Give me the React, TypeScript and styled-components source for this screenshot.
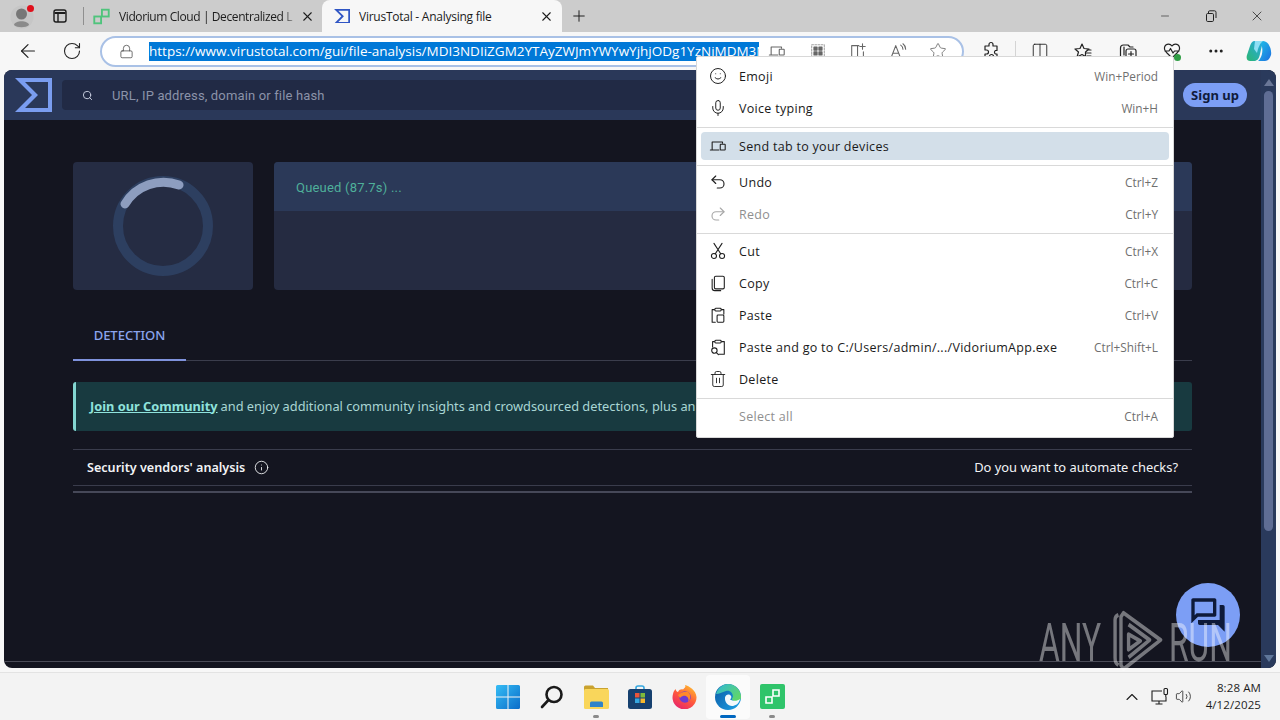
import React from "react";
import styled, { createGlobalStyle } from "styled-components";
import {
  ArrowLeft, RotateCw, Lock, Star, Columns2, Smile, Mic, Undo2, Redo2, Trash2,
  Search, X, Plus, Minus, Info, ChevronUp, Volume2, MoreHorizontal,
} from "lucide-react";
import { MdOutlineForum } from "react-icons/md";

const GlobalStyle = createGlobalStyle`
  html, body { margin: 0; padding: 0; overflow: hidden; background: #f3f3f3; }
  * { box-sizing: border-box; }
`;

const Screen = styled.div`
  position: relative;
  width: 1280px;
  height: 720px;
  display: flex;
  flex-direction: column;
  overflow: hidden;
  font-family: "Open Sans", "Noto Sans", sans-serif;
  background: #f7f7f7;
`;

/* browser chrome */
const TabStrip = styled.div`
  height: 32px;
  display: flex;
  align-items: center;
  background: #cccccc;
  color: #1c1c1c;
`;

const Avatar = styled.div`
  position: relative;
  width: 44px;
  height: 32px;
  padding-top: 1px;
  display: flex;
  align-items: center;
  justify-content: center;
`;

const RedDot = styled.span`
  position: absolute;
  left: 27px;
  top: 5px;
  width: 7px;
  height: 7px;
  border-radius: 50%;
  background: #e0101c;
`;

const StripButton = styled.div`
  width: 32px;
  height: 32px;
  display: flex;
  align-items: center;
  justify-content: center;
`;

const NewTabButton = styled(StripButton)`
  margin-left: 1px;
`;

const StripDivider = styled.div`
  width: 1px;
  height: 18px;
  margin: 0 6px 0 7px;
  background: #8f8f8f;
`;

const Tab = styled.div<{ $active?: boolean }>`
  height: 32px;
  display: flex;
  align-items: center;
  flex: none;
  width: ${p => (p.$active ? "240px" : "232px")};
  padding: ${p => (p.$active ? "0 8px 0 12px" : "0 7px 0 3px")};
  background: ${p => (p.$active ? "#f7f7f7" : "transparent")};
  border-radius: 8px 8px 0 0;
`;

const TabTitle = styled.span<{ $fade?: boolean }>`
  flex: 1;
  margin-left: 9px;
  font-size: 12px;
  letter-spacing: ${p => (p.$fade ? "-0.4px" : "-0.25px")};
  white-space: nowrap;
  overflow: hidden;
  ${p => p.$fade && "mask-image: linear-gradient(90deg, #000 90%, rgba(0,0,0,0.2) 97%);"}
`;

const WindowControls = styled.div`
  margin-left: auto;
  display: flex;
`;

const WindowButton = styled.div`
  width: 46px;
  height: 32px;
  display: flex;
  align-items: center;
  justify-content: center;
`;

const Toolbar = styled.div`
  height: 38px;
  display: flex;
  align-items: center;
  padding: 0 0 0 6px;
  background: #f7f7f7;
  color: #222;
`;

const ToolButton = styled.div<{ $w?: number }>`
  position: relative;
  flex: none;
  width: ${p => p.$w ?? 44}px;
  height: 30px;
  display: flex;
  align-items: center;
  justify-content: center;
`;

const AddressBar = styled.div`
  width: 864px;
  height: 31px;
  flex: none;
  margin-left: 6px;
  margin-right: 6px;
  display: flex;
  align-items: center;
  padding: 0 0 0 17px;
  background: #fff;
  border: 2px solid #a9c1e6;
  border-radius: 16px;
  overflow: hidden;
`;

const UrlSelection = styled.span`
  width: 610px;
  flex: none;
  margin-left: 15px;
  height: 19px;
  line-height: 19px;
  background: #0078d7;
  color: #fff;
  font-size: 13.5px;
  white-space: nowrap;
  overflow: hidden;
`;

const AddressIcons = styled.div`
  display: flex;
  align-items: center;
  margin-left: -2px;
  color: #666;
`;

const ToolDivider = styled.div`
  width: 1px;
  height: 20px;
  margin: 0 3px;
  background: #d4d4d4;
`;

const HealthDot = styled.span`
  position: absolute;
  right: 13px;
  bottom: 5px;
  width: 7px;
  height: 7px;
  border-radius: 50%;
  background: #2f9e44;
`;

/* web page */
const Page = styled.div`
  flex: 1;
  min-height: 0;
  display: flex;
  margin: 0 4px 4px;
  border-radius: 8px;
  overflow: hidden;
  background: #141520;
`;

const Viewport = styled.div`
  flex: 1;
  min-width: 0;
  display: flex;
  flex-direction: column;
`;

const SiteHeader = styled.div`
  height: 50px;
  flex: none;
  display: flex;
  align-items: center;
  padding: 0 14px 0 11px;
  background: #2a3859;
`;

const SearchBox = styled.div`
  flex: 1;
  height: 30px;
  margin: 0 13px 0 10px;
  display: flex;
  align-items: center;
  padding-left: 20px;
  gap: 19px;
  background: #212a45;
  border-radius: 4px;
  color: #cfd5e6;
`;

const SearchText = styled.span`
  font-size: 13px;
  letter-spacing: 0.15px;
  color: #8b93a9;
  font-family: Roboto, "Noto Sans", sans-serif;
`;

const SignUp = styled.div`
  width: 64px;
  height: 24px;
  border-radius: 12px;
  display: flex;
  align-items: center;
  justify-content: center;
  background: #7c9ef5;
  color: #101b3c;
  font-size: 13px;
  font-weight: 700;
  font-family: "Noto Sans", sans-serif;
`;

const Main = styled.div`
  flex: 1;
  padding: 42px 69px 0;
  font-family: "Noto Sans", sans-serif;
`;

const SummaryRow = styled.div`
  display: flex;
  gap: 21px;
  height: 128px;
`;

const SpinnerCard = styled.div`
  width: 180px;
  flex: none;
  display: flex;
  align-items: center;
  justify-content: center;
  background: #252c43;
  border-radius: 4px;
`;

const StatusCard = styled.div`
  flex: 1;
  background: #252b41;
  border-radius: 4px;
  overflow: hidden;
`;

const StatusHead = styled.div`
  height: 49px;
  display: flex;
  align-items: center;
  padding: 2px 0 0 22px;
  background: #2b3958;
  color: #4fb09a;
  font-size: 13px;
  font-family: Roboto, sans-serif;
  letter-spacing: 0.2px;
`;

const TabBar = styled.div`
  height: 50px;
  margin-top: 21px;
  display: flex;
  border-bottom: 1px solid #3b3d4c;
`;

const PageTab = styled.div`
  width: 113px;
  height: 50px;
  display: flex;
  align-items: center;
  justify-content: center;
  padding-bottom: 1px;
  border-bottom: 2px solid #7f92dc;
  color: #8ba5ee;
  font-size: 13px;
  font-weight: 500;
`;

const Banner = styled.div`
  height: 49px;
  margin-top: 21px;
  display: flex;
  align-items: center;
  padding: 0 0 2px 14px;
  background: #183a40;
  border-left: 3px solid #83d6d1;
  border-radius: 3px;
  color: #a9d6d4;
  font-size: 12.8px;
  white-space: nowrap;
  overflow: hidden;
`;

const BannerLink = styled.a`
  color: #8fe3dc;
  font-weight: 700;
  text-decoration: underline;
  margin-right: 3px;
`;

const VendorsRow = styled.div`
  height: 37px;
  margin-top: 18px;
  display: flex;
  align-items: center;
  justify-content: space-between;
  padding: 0 14px;
  border-top: 1px solid #3a3c4c;
  border-bottom: 1px solid #3a3c4c;
  color: #f2f3f6;
  font-size: 12.9px;
`;

const VendorsTitle = styled.span`
  display: flex;
  align-items: center;
  gap: 9px;
  font-size: 12.6px;
  font-weight: 600;
`;

const AutomateText = styled.span`
  margin-bottom: 2px;
`;

const ThickLine = styled.div`
  height: 2px;
  margin-top: 5px;
  background: #464858;
`;

const PageFooter = styled.div`
  height: 7px;
  flex: none;
  border-top: 1px solid #4b4c58;
`;

const Scrollbar = styled.div`
  position: relative;
  width: 15px;
  flex: none;
  display: flex;
  flex-direction: column;
  align-items: center;
  padding: 9px 0 6px;
  background: #2a3a5c;
`;

const ArrowUp = styled.span`
  width: 0;
  height: 0;
  border-left: 5px solid transparent;
  border-right: 5px solid transparent;
  border-bottom: 7px solid #6a7797;
`;

const ArrowDown = styled(ArrowUp)`
  transform: rotate(180deg);
  margin-top: auto;
  border-bottom-color: #5f7699;
`;

const ScrollThumb = styled.div`
  width: 9px;
  height: 440px;
  margin-top: 5px;
  border-radius: 5px;
  background: #5f6d94;
`;

/* overlays */
const ChatButton = styled.div`
  position: absolute;
  left: 1176px;
  top: 583px;
  width: 64px;
  height: 64px;
  border-radius: 50%;
  display: flex;
  align-items: center;
  justify-content: center;
  background: #7c9ef5;
  color: #0e1a3a;
`;

const Watermark = styled.div`
  position: absolute;
  left: 1039px;
  top: 608px;
  height: 64px;
  display: flex;
  align-items: center;
  gap: 5px;
  color: rgba(255, 255, 255, 0.42);
`;

const WatermarkWord = styled.span`
  display: inline-block;
  width: 66px;
  font-family: Roboto, sans-serif;
  font-weight: 400;
  font-size: 53px;
  line-height: 64px;
  padding-top: 6px;
  transform: scaleX(0.6);
  transform-origin: left center;
  white-space: nowrap;
`;

const ContextMenu = styled.div`
  position: absolute;
  left: 696px;
  top: 56px;
  width: 478px;
  height: 382px;
  padding: 3px 0 0;
  background: #fff;
  border: 1px solid #d8d8d8;
  border-radius: 2px;
  color: #1a1a1a;
  font-size: 12.5px;
  font-family: "Open Sans", "Noto Sans", sans-serif;
`;

const MenuItem = styled.div<{ $disabled?: boolean; $active?: boolean }>`
  height: ${p => (p.$active ? 28 : 32)}px;
  margin: ${p => (p.$active ? "4px 4px 0" : "0 4px")};
  padding: 0 11px 0 8px;
  display: flex;
  align-items: center;
  border-radius: 4px;
  letter-spacing: 0.3px;
  background: ${p => (p.$active ? "#d3dfe9" : "transparent")};
  color: ${p => (p.$disabled ? "#8f8f8f" : "#1a1a1a")};
`;

const MenuIcon = styled.span<{ $disabled?: boolean }>`
  width: 18px;
  height: 18px;
  margin-right: 12px;
  flex: none;
  display: flex;
  align-items: center;
  justify-content: center;
  color: ${p => (p.$disabled ? "#a8a8a8" : "#1f1f1f")};
`;

const MenuLabel = styled.span`
  flex: 1;
  white-space: nowrap;
`;

const Shortcut = styled.span`
  font-size: 11.8px;
  letter-spacing: 0;
  color: #6f6f6f;
  white-space: nowrap;
`;

const MenuLine = styled.div<{ $top?: number; $bottom?: number }>`
  height: 1px;
  margin: ${p => p.$top ?? 3}px 0 ${p => p.$bottom ?? 1}px;
  background: #d9d9d9;
`;

/* taskbar */
const Taskbar = styled.div`
  height: 48px;
  flex: none;
  display: grid;
  grid-template-columns: 1fr auto 1fr;
  align-items: center;
  background: #f3f3f3;
  border-top: 1px solid #e3e3e3;
`;

const TaskIcons = styled.div`
  grid-column: 2;
  display: flex;
`;

const TaskSlot = styled.div<{ $active?: boolean }>`
  position: relative;
  width: 44px;
  height: 44px;
  display: flex;
  align-items: center;
  justify-content: center;
  border-radius: 4px;
  background: ${p => (p.$active ? "#fbfbfb" : "transparent")};
`;

const RunMark = styled.span<{ $active?: boolean }>`
  position: absolute;
  bottom: 1px;
  left: 50%;
  transform: translateX(-50%);
  width: ${p => (p.$active ? 16 : 6)}px;
  height: 3px;
  border-radius: 2px;
  background: ${p => (p.$active ? "#0067c0" : "#8a8a8a")};
`;

const Tray = styled.div`
  grid-column: 3;
  justify-self: end;
  display: flex;
  align-items: center;
  padding-right: 19px;
  color: #1d1d1d;
`;

const TrayIcon = styled.div<{ $w: number }>`
  width: ${p => p.$w}px;
  display: flex;
  justify-content: center;
`;

const Clock = styled.div`
  margin: -2px 0 0 13px;
  text-align: right;
  font-size: 11.5px;
  line-height: 17px;
  letter-spacing: 0.1px;
`;

/* drawings */
const VtLogo = ({ size, color = "#7a9df0" }: { size: number; color?: string }) => (
  <svg width={size} height={size * 34 / 37} viewBox="0 0 37 34" style={{ flex: "none" }}>
    <path fillRule="evenodd" fill={color} d="M0 0H37V34H0L17 17ZM10 4L23 17L10 30H33V4Z" />
  </svg>
);

const VidoriumMark = ({ size, color }: { size: number; color: string }) => (
  <svg width={size} height={size} viewBox="0 0 20 20" fill="none" stroke={color} strokeWidth="2.2" style={{ flex: "none" }}>
    <rect x="1.5" y="10" width="8" height="8" />
    <rect x="10.5" y="2" width="8" height="8" />
  </svg>
);

const Outline = ({ size = 18, children }: { size?: number; children: React.ReactNode }) => (
  <svg width={size} height={size} viewBox="0 0 20 20" fill="none" stroke="currentColor" strokeWidth="1.2" strokeLinecap="round" strokeLinejoin="round">
    {children}
  </svg>
);

const DevicesIcon = ({ size }: { size?: number }) => (
  <Outline size={size}>
    <path d="M3.5 14V5.5H15V7M1.5 14.5H11" />
    <rect x="12.5" y="8" width="5.5" height="6.5" rx="0.5" />
  </Outline>
);

const AppsIcon = () => (
  <Outline>
    <rect x="3" y="3" width="14" height="14" strokeDasharray="2 1.5" strokeOpacity="0.6" />
    <rect x="5.5" y="5.5" width="3.5" height="3.5" fill="currentColor" />
    <rect x="11" y="5.5" width="3.5" height="3.5" fill="currentColor" />
    <rect x="5.5" y="11" width="3.5" height="3.5" fill="currentColor" />
    <rect x="11" y="11" width="3.5" height="3.5" fill="currentColor" />
  </Outline>
);

const SplitAddIcon = () => (
  <Outline>
    <path d="M11 4H3V17H16V11M9.5 4V17M15 2V8M12 5H18" />
  </Outline>
);

const ReadAloudIcon = () => (
  <Outline>
    <path d="M2.5 17L7.5 4L12.5 17M4.5 12.5H10.5M13 3.5C14.5 4.5 15.5 6 15.5 8M15.5 2C17.5 3.5 18.5 5.5 18.5 8" />
  </Outline>
);

const ExtensionIcon = () => (
  <Outline size={20}>
    <path d="M8 3.5A2 2 0 0 1 12 3.5V5H16V9.5H14.5A2 2 0 0 0 14.5 13H16V17H12.5V15.5A2 2 0 0 0 8.5 15.5V17H4V13H5.5A2 2 0 0 0 5.5 9H4V5H8Z" />
  </Outline>
);

const FavListIcon = () => (
  <Outline size={20}>
    <path d="M9 3L11 7.5L16 8L12.5 11V15.5L9 13.5L4 16L5.5 11L2 8L7 7.5ZM13.5 12H18M14 15H18M14 9H18" />
  </Outline>
);

const CollectionsIcon = () => (
  <Outline size={20}>
    <path d="M6 17H4.5A2 2 0 0 1 2.5 15V7A3 3 0 0 1 5.5 4H10L12 6H15M6 6V14" />
    <rect x="8" y="8" width="10" height="10" rx="2" />
    <path d="M13 10.5V15.5M10.5 13H15.5" />
  </Outline>
);

const HealthIcon = () => (
  <Outline size={20}>
    <path d="M10 5C7.5 1.5 2 3 2.5 8C2.7 10 4 11 5 12L10 17L15 12C16 11 17.3 10 17.5 8C18 3 12.5 1.5 10 5ZM3 10H7L8.5 7.5L11 12L12.5 10H17" />
  </Outline>
);

const TabActionsIcon = () => (
  <svg width="16" height="16" viewBox="0 0 16 16" fill="none" stroke="#1c1c1c" strokeWidth="1.4">
    <rect x="2" y="2" width="12" height="12" rx="2" />
    <path d="M2.5 5H13.5" strokeWidth="2" />
    <path d="M6 5V14" />
  </svg>
);

const RestoreIcon = () => (
  <svg width="12" height="12" viewBox="0 0 12 12" fill="none" stroke="#222" strokeWidth="1">
    <rect x="1.5" y="3.5" width="7" height="8" rx="1.2" />
    <path d="M3.5 3V2A1.2 1.2 0 0 1 4.7 .8H9.5A1.5 1.5 0 0 1 11 2.3V8" />
  </svg>
);

const PersonIcon = () => (
  <svg width="24" height="24" viewBox="0 0 24 24">
    <circle cx="12" cy="12" r="11.5" fill="#c6c6c6" />
    <circle cx="11.5" cy="9" r="5.5" fill="#777" />
    <path d="M4 20C5 15 18 15 19 20C16 23 7 23 4 20Z" fill="#8a8a8a" />
  </svg>
);

const ScissorsIcon = () => (
  <Outline>
    <circle cx="5.5" cy="15.5" r="2.8" />
    <circle cx="14.5" cy="15.5" r="2.8" />
    <path d="M7 13L14.5 1.5M13 13L5.5 1.5" />
  </Outline>
);

const CopyIcon = () => (
  <Outline>
    <rect x="6" y="2.5" width="11" height="14" rx="1.5" />
    <path d="M3.5 6V15.5A3 3 0 0 0 6.5 18.5H13" />
  </Outline>
);

const PasteIcon = () => (
  <Outline>
    <path d="M6 4H3.5V18H7M14 4H16.5V9" />
    <rect x="6.5" y="2.5" width="7" height="3" rx="1" />
    <rect x="9" y="10" width="7.5" height="8" rx="1" />
  </Outline>
);

const PasteGoIcon = () => (
  <Outline>
    <path d="M6 4H4V10M14 4H17V18H11" />
    <rect x="6.5" y="2.5" width="7" height="3" rx="1" />
    <circle cx="6" cy="14" r="3" />
    <path d="M8.2 16.2L10.5 18.5" />
  </Outline>
);

const CopilotIcon = () => (
  <svg width="26" height="26" viewBox="0 0 26 26">
    <defs>
      <linearGradient id="cpA" x1="0" y1="0" x2="1" y2="1">
        <stop offset="0" stopColor="#1fc3e8" />
        <stop offset="1" stopColor="#1e6fe0" />
      </linearGradient>
      <linearGradient id="cpB" x1="0" y1="1" x2="1" y2="0">
        <stop offset="0" stopColor="#2bb673" />
        <stop offset="1" stopColor="#28a8ea" />
      </linearGradient>
    </defs>
    <path d="M9 3H17L14 16C13 21 11 23 8 23H4C1 23 0 20 1 17L4 8C5 5 6 3 9 3Z" fill="url(#cpB)" />
    <path d="M12 23H19C22 23 24 20 25 17C26 12 23 3 17 3C14 3 15 6 16 9C17 13 16 20 12 23Z" fill="url(#cpA)" />
    <path d="M9 3H17C14 5 12 10 11 15L8 11Z" fill="#8fdff5" />
  </svg>
);

const WindowsLogo = () => (
  <svg width="24" height="24" viewBox="0 0 24 24">
    <defs>
      <linearGradient id="winG" x1="0" y1="0" x2="1" y2="1">
        <stop offset="0" stopColor="#35bdf5" />
        <stop offset="1" stopColor="#0a6cc9" />
      </linearGradient>
    </defs>
    <path fill="url(#winG)" d="M0 1.5A1.5 1.5 0 0 1 1.5 0H11.5V11.5H0ZM12.5 0H22.5A1.5 1.5 0 0 1 24 1.5V11.5H12.5ZM0 12.5H11.5V24H1.5A1.5 1.5 0 0 1 0 22.5ZM12.5 12.5H24V22.5A1.5 1.5 0 0 1 22.5 24H12.5Z" />
  </svg>
);

const SearchGlass = () => (
  <svg width="24" height="24" viewBox="0 0 24 24" fill="none" stroke="#1a1a1a" strokeWidth="2.6" strokeLinecap="round">
    <circle cx="14" cy="9.5" r="7.5" />
    <path d="M8.5 15L2 22" />
  </svg>
);

const FolderIcon = () => (
  <svg width="25" height="24" viewBox="0 0 25 24">
    <path d="M0 2A1.5 1.5 0 0 1 1.5 .5H9L11 3H24V8H0Z" fill="#c9a22f" />
    <rect y="4" width="25" height="20" rx="1.5" fill="#f9d65b" />
    <path d="M6 22V18A1.5 1.5 0 0 1 7.5 16.5H17.5A1.5 1.5 0 0 1 19 18V22Z" fill="#2f83c9" />
  </svg>
);

const StoreIcon = () => (
  <svg width="24" height="24" viewBox="0 0 24 24">
    <path d="M8 5V3A2 2 0 0 1 10 1H14A2 2 0 0 1 16 3V5" fill="none" stroke="#35a7e0" strokeWidth="1.6" />
    <rect y="4" width="24" height="20" rx="2.5" fill="#16406f" />
    <rect x="7" y="8" width="4.5" height="4.5" fill="#e9553b" />
    <rect x="12.5" y="8" width="4.5" height="4.5" fill="#7fba3a" />
    <rect x="7" y="13.5" width="4.5" height="4.5" fill="#35a7e0" />
    <rect x="12.5" y="13.5" width="4.5" height="4.5" fill="#f5b82e" />
  </svg>
);

const FirefoxIcon = () => (
  <svg width="25" height="25" viewBox="0 0 25 25">
    <defs>
      <linearGradient id="ffG" x1="0.8" y1="0" x2="0.2" y2="1">
        <stop offset="0" stopColor="#ffbd2e" />
        <stop offset="0.5" stopColor="#ff5a3c" />
        <stop offset="1" stopColor="#e5206f" />
      </linearGradient>
    </defs>
    <path d="M13 1C17 2 24 6 24.5 13A12 12 0 1 1 1 10C1.5 7 3 6 3.5 5C4 7 5 8 6 8C7 5.5 9.5 5 11 5.5C13 3.5 14 3 13 1Z" fill="url(#ffG)" />
    <circle cx="13" cy="13" r="5.8" fill="#6d3bd1" />
    <path d="M6 11C9 8 13 7 16 8C19 10 19 15 16 18C18 14 14 11 11 12C9 12.5 8 14 8 14Z" fill="#ff8a2a" />
  </svg>
);

const EdgeIcon = () => (
  <svg width="26" height="26" viewBox="0 0 26 26">
    <defs>
      <linearGradient id="edG" x1="0" y1="0" x2="1" y2="0.8">
        <stop offset="0" stopColor="#0c59a4" />
        <stop offset="1" stopColor="#1b9de2" />
      </linearGradient>
      <linearGradient id="edH" x1="0" y1="0" x2="1" y2="0.6">
        <stop offset="0" stopColor="#2fb8d8" />
        <stop offset="1" stopColor="#5fd66b" />
      </linearGradient>
    </defs>
    <circle cx="13" cy="13" r="13" fill="url(#edG)" />
    <path d="M1 10C3 3 9 0 13 0C20 0 26 6 26 13C26 17 22 18 19 17C16 16 17 14 18 13C18 9 15 6 11 7C7 8 4 10 1 10Z" fill="url(#edH)" />
    <path d="M10 13.5C10.5 11 13 10 15 11C17 12 16.5 14.5 15 15.5C18 17 22 17.5 25 15C24 20 20 22 17 22C13 22 9.5 18 10 13.5Z" fill="#f3f8fb" />
  </svg>
);

const MonitorTray = () => (
  <svg width="20" height="20" viewBox="0 0 20 20" fill="none" stroke="currentColor" strokeWidth="1.1">
    <path d="M12 4H2V14H16V10M9 14V17M5.5 17H12.5" />
    <rect x="14" y="1.5" width="3.5" height="6" rx="1" />
    <path d="M15.8 7.5V10" />
  </svg>
);

const PlayMark = () => (
  <svg width="54" height="62" viewBox="0 0 64 64" preserveAspectRatio="none" fill="none" stroke="currentColor" strokeWidth="4" strokeLinejoin="round" style={{ flex: "none" }}>
    <path d="M10 6C7 7 6 8 6 11V50C6 55 7 56 10 58" />
    <path d="M16 4L60 32L16 62L13 58V8Z" />
    <path d="M22 16L47 32L22 50" />
    <path d="M22 26L36 33L22 42Z" />
  </svg>
);

const MENU: Array<
  | { line: true; top?: number; bottom?: number }
  | { label: string; keys: string; icon?: React.ReactNode; disabled?: boolean; active?: boolean; line?: false }
> = [
  { label: "Emoji", keys: "Win+Period", icon: <Smile size={18} strokeWidth={1.3} /> },
  { label: "Voice typing", keys: "Win+H", icon: <Mic size={18} strokeWidth={1.3} /> },
  { line: true },
  { label: "Send tab to your devices", keys: "", icon: <DevicesIcon />, active: true },
  { line: true, top: 5, bottom: 0 },
  { label: "Undo", keys: "Ctrl+Z", icon: <Undo2 size={18} strokeWidth={1.5} /> },
  { label: "Redo", keys: "Ctrl+Y", icon: <Redo2 size={18} strokeWidth={1.5} />, disabled: true },
  { line: true },
  { label: "Cut", keys: "Ctrl+X", icon: <ScissorsIcon /> },
  { label: "Copy", keys: "Ctrl+C", icon: <CopyIcon /> },
  { label: "Paste", keys: "Ctrl+V", icon: <PasteIcon /> },
  { label: "Paste and go to C:/Users/admin/.../VidoriumApp.exe", keys: "Ctrl+Shift+L", icon: <PasteGoIcon /> },
  { label: "Delete", keys: "", icon: <Trash2 size={18} strokeWidth={1.2} /> },
  { line: true },
  { label: "Select all", keys: "Ctrl+A", disabled: true },
];

const URL_TEXT = "https://www.virustotal.com/gui/file-analysis/MDI3NDIiZGM2YTAyZWJmYWYwYjhjODg1YzNiMDM3N";

const App = () => (
  <Screen>
    <GlobalStyle />

    <TabStrip>
      <Avatar>
        <PersonIcon />
        <RedDot />
      </Avatar>
      <StripButton><TabActionsIcon /></StripButton>
      <StripDivider />
      <Tab>
        <VidoriumMark size={17} color="#4fc47c" />
        <TabTitle $fade>Vidorium Cloud | Decentralized L</TabTitle>
        <X size={15} strokeWidth={1.7} />
      </Tab>
      <Tab $active>
        <VtLogo size={16} color="#2f55c4" />
        <TabTitle>VirusTotal - Analysing file</TabTitle>
        <X size={15} strokeWidth={1.7} />
      </Tab>
      <NewTabButton><Plus size={18} strokeWidth={1.3} /></NewTabButton>
      <WindowControls>
        <WindowButton><Minus size={12} strokeWidth={1.2} /></WindowButton>
        <WindowButton><RestoreIcon /></WindowButton>
        <WindowButton><X size={16} strokeWidth={1.1} /></WindowButton>
      </WindowControls>
    </TabStrip>

    <Toolbar>
      <ToolButton><ArrowLeft size={22} strokeWidth={1.3} /></ToolButton>
      <ToolButton><RotateCw size={20} strokeWidth={1.3} /></ToolButton>
      <AddressBar>
        <Lock size={15} strokeWidth={1.2} color="#444" style={{ flex: "none" }} />
        <UrlSelection>{URL_TEXT}</UrlSelection>
        <AddressIcons>
          <ToolButton $w={40}><DevicesIcon /></ToolButton>
          <ToolButton $w={41}><AppsIcon /></ToolButton>
          <ToolButton $w={40}><SplitAddIcon /></ToolButton>
          <ToolButton $w={40}><ReadAloudIcon /></ToolButton>
          <ToolButton $w={39}><Star size={18} strokeWidth={1.1} /></ToolButton>
        </AddressIcons>
      </AddressBar>
      <ToolButton $w={42}><ExtensionIcon /></ToolButton>
      <ToolDivider />
      <ToolButton $w={42}><Columns2 size={18} strokeWidth={1.2} /></ToolButton>
      <ToolButton $w={44}><FavListIcon /></ToolButton>
      <ToolButton $w={45}><CollectionsIcon /></ToolButton>
      <ToolButton $w={44}><HealthIcon /><HealthDot /></ToolButton>
      <ToolButton $w={43}><MoreHorizontal size={18} strokeWidth={2} /></ToolButton>
      <ToolButton $w={43}><CopilotIcon /></ToolButton>
    </Toolbar>

    <Page>
      <Viewport>
        <SiteHeader>
          <VtLogo size={37} />
          <SearchBox>
            <Search size={11} strokeWidth={2} />
            <SearchText>URL, IP address, domain or file hash</SearchText>
          </SearchBox>
          <SignUp>Sign up</SignUp>
        </SiteHeader>
        <Main>
          <SummaryRow>
            <SpinnerCard>
              <svg width="100" height="100" viewBox="0 0 100 100" fill="none">
                <circle cx="50" cy="50" r="45" stroke="#2d3f60" strokeWidth="10" />
                <path d="M12 28A45 45 0 0 1 66 9" stroke="#8d9dbf" strokeWidth="9" strokeLinecap="round" />
              </svg>
            </SpinnerCard>
            <StatusCard>
              <StatusHead>Queued (87.7s) ...</StatusHead>
            </StatusCard>
          </SummaryRow>
          <TabBar>
            <PageTab>DETECTION</PageTab>
          </TabBar>
          <Banner>
            <BannerLink>Join our Community</BannerLink>
            and enjoy additional community insights and crowdsourced detections, plus an
          </Banner>
          <VendorsRow>
            <VendorsTitle>
              Security vendors' analysis
              <Info size={15} strokeWidth={1.4} />
            </VendorsTitle>
            <AutomateText>Do you want to automate checks?</AutomateText>
          </VendorsRow>
          <ThickLine />
        </Main>
        <PageFooter />
      </Viewport>
      <Scrollbar>
        <ArrowUp />
        <ScrollThumb />
        <ArrowDown />
      </Scrollbar>
    </Page>

    <Taskbar>
      <TaskIcons>
        <TaskSlot><WindowsLogo /></TaskSlot>
        <TaskSlot><SearchGlass /></TaskSlot>
        <TaskSlot><FolderIcon /><RunMark /></TaskSlot>
        <TaskSlot><StoreIcon /></TaskSlot>
        <TaskSlot><FirefoxIcon /></TaskSlot>
        <TaskSlot $active><EdgeIcon /><RunMark $active /></TaskSlot>
        <TaskSlot>
          <svg width="25" height="25" viewBox="0 0 25 25">
            <rect width="25" height="25" rx="2" fill="#2fc46a" />
            <path d="M6 13H12V19H6ZM13 6H19V12H13Z" fill="none" stroke="#fff" strokeWidth="1.6" />
          </svg>
          <RunMark />
        </TaskSlot>
      </TaskIcons>
      <Tray>
        <TrayIcon $w={26}><ChevronUp size={20} strokeWidth={1.3} /></TrayIcon>
        <TrayIcon $w={30}><MonitorTray /></TrayIcon>
        <TrayIcon $w={18}><Volume2 size={17} strokeWidth={1.1} /></TrayIcon>
        <Clock>
          <div>8:28 AM</div>
          <div>4/12/2025</div>
        </Clock>
      </Tray>
    </Taskbar>

    <ChatButton><MdOutlineForum size={40} /></ChatButton>

    <Watermark>
      <WatermarkWord>ANY</WatermarkWord>
      <PlayMark />
      <WatermarkWord>RUN</WatermarkWord>
    </Watermark>

    <ContextMenu>
      {MENU.map((item, idx) =>
        item.line ? (
          <MenuLine key={idx} $top={item.top} $bottom={item.bottom} />
        ) : (
          <MenuItem key={idx} $disabled={item.disabled} $active={item.active}>
            <MenuIcon $disabled={item.disabled}>{item.icon}</MenuIcon>
            <MenuLabel>{item.label}</MenuLabel>
            <Shortcut>{item.keys}</Shortcut>
          </MenuItem>
        )
      )}
    </ContextMenu>
  </Screen>
);

export default App;
